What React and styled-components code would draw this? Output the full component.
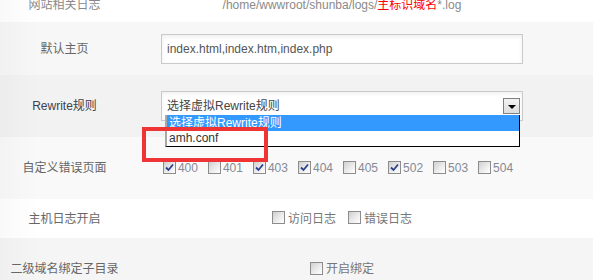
import React from 'react';
import styled, { createGlobalStyle } from 'styled-components';

const GlobalStyle = createGlobalStyle`
  html, body {
    margin: 0;
    padding: 0;
    background: #fff;
    overflow: hidden;
  }
  body {
    font-family: "Liberation Sans", "Noto Sans CJK SC", Arial, sans-serif;
    font-size: 12px;
  }
`;

// --- Layout ---
const Viewport = styled.div`
  width: 593px;
  height: 280px;
  overflow: hidden;
`;

const Page = styled.div`
  margin-top: -13px;
`;

const Row = styled.div`
  display: grid;
  grid-template-columns: 129px 426px 1fr;
  align-items: center;
  height: ${p => p.$h}px;
  background-color: ${p => p.$bg || '#fff'};
  background-image: linear-gradient(to right, rgba(0, 0, 0, 0.025), rgba(0, 0, 0, 0) 40px);
`;

const Label = styled.div`
  text-align: center;
  line-height: 16px;
  color: ${p => p.$color || '#666'};
`;

const Value = styled.div`
  display: flex;
  justify-content: center;
  align-items: center;
  line-height: 16px;
  color: #888;
`;

const Path = styled.span`
  color: #8a8a8a;
`;

const Red = styled.span`
  color: #f00;
`;

// --- Form parts ---
const TextInput = styled.div`
  box-sizing: border-box;
  width: 362px;
  height: 30px;
  padding-left: 5px;
  display: flex;
  align-items: center;
  background: #fff;
  border: 1px solid #c9c9c9;
  box-shadow: inset 0 2px 4px rgba(0, 0, 0, 0.07);
  color: #555;
`;

const SelectWrap = styled.div`
  position: relative;
  width: 362px;
  height: 30px;
`;

const SelectBox = styled.div`
  box-sizing: border-box;
  width: 100%;
  height: 100%;
  padding-left: 5px;
  display: flex;
  align-items: center;
  background: #fff;
  border: 1px solid #c9c9c9;
  box-shadow: inset 0 2px 4px rgba(0, 0, 0, 0.06);
  color: #444;
`;

const ArrowButton = styled.span`
  position: absolute;
  right: 3px;
  top: 7px;
  box-sizing: border-box;
  width: 17px;
  height: 16px;
  border: 1px solid #808080;
  background: linear-gradient(#f4f4f4, #dcdcdc);
  display: flex;
  align-items: center;
  justify-content: center;

  &::after {
    content: '';
    border-left: 4px solid transparent;
    border-right: 4px solid transparent;
    border-top: 4px solid #000;
    margin-top: 1px;
  }
`;

const OptionList = styled.div`
  position: absolute;
  left: 4px;
  top: 24px;
  z-index: 2;
  box-sizing: border-box;
  width: 355px;
  background: #fff;
  border-right: 1px solid #000;
  border-bottom: 1px solid #000;
  border-left: 2px solid #a8a8a8;
`;

const Option = styled.div`
  height: ${p => p.$h}px;
  line-height: ${p => p.$h}px;
  padding-left: 2px;
  background: ${p => (p.$active ? '#3399ff' : '#fff')};
  color: ${p => (p.$active ? '#fff' : '#333')};
`;

const Highlight = styled.div`
  position: absolute;
  left: -19px;
  top: 36px;
  z-index: 3;
  box-sizing: border-box;
  width: 126px;
  height: 35px;
  border: 4px solid #ee3434;
  pointer-events: none;
`;

// --- Checkboxes ---
const CheckGroup = styled.div`
  display: flex;
  align-items: center;
  gap: ${p => p.$gap}px;
  margin-right: ${p => p.$shift || 0}px;
`;

const CheckItem = styled.label`
  display: flex;
  align-items: center;
  gap: ${p => p.$gap || 3}px;
  color: ${p => p.$color || '#858a94'};
`;

const Box = styled.span`
  box-sizing: border-box;
  width: 13px;
  height: 13px;
  border: 1px solid #8c8c8c;
  background: linear-gradient(135deg, #cfcfcf 0%, #ececec 55%, #fff 100%);
  display: inline-flex;
  align-items: center;
  justify-content: center;
  margin-top: -2px;
`;

const Checkbox = ({ checked }) => (
  <Box>
    {checked && (
      <svg width="9" height="9" viewBox="0 0 9 9">
        <path d="M1 4.5 L3.5 7 L8 1.5" fill="none" stroke="#2b3f8f" strokeWidth="1.8" />
      </svg>
    )}
  </Box>
);

const codes = [
  ['400', true],
  ['401', false],
  ['403', true],
  ['404', true],
  ['405', false],
  ['502', true],
  ['503', false],
  ['504', false],
];

const App = () => (
  <>
    <GlobalStyle />
    <Viewport>
      <Page>
        <Row $h={35}>
          <Label $color="#888">网站相关日志</Label>
          <Value>
            <Path>
              /home/wwwroot/shunba/logs/<Red>主标识域名</Red>*.log
            </Path>
          </Value>
        </Row>

        <Row $h={53} $bg="#f7f7f7">
          <Label>默认主页</Label>
          <Value>
            <TextInput>index.html,index.htm,index.php</TextInput>
          </Value>
        </Row>

        <Row $h={62} $bg="#f2f2f2">
          <Label $color="#3c4150">Rewrite规则</Label>
          <Value>
            <SelectWrap>
              <SelectBox>选择虚拟Rewrite规则</SelectBox>
              <ArrowButton />
              <OptionList>
                <Option $h={16} $active>选择虚拟Rewrite规则</Option>
                <Option $h={15}>amh.conf</Option>
              </OptionList>
              <Highlight />
            </SelectWrap>
          </Value>
        </Row>

        <Row $h={62} $bg="#f9f9f9">
          <Label>自定义错误页面</Label>
          <Value>
            <CheckGroup $gap={10} $shift={8}>
              {codes.map(([code, on]) => (
                <CheckItem key={code} $gap={2}>
                  <Checkbox checked={on} />
                  {code}
                </CheckItem>
              ))}
            </CheckGroup>
          </Value>
        </Row>

        <Row $h={39}>
          <Label>主机日志开启</Label>
          <Value>
            <CheckGroup $gap={12}>
              <CheckItem $color="#777">
                <Checkbox />
                访问日志
              </CheckItem>
              <CheckItem $color="#777">
                <Checkbox />
                错误日志
              </CheckItem>
            </CheckGroup>
          </Value>
        </Row>

        <Row $h={62} $bg="#f5f5f5">
          <Label>二级域名绑定子目录</Label>
          <Value>
            <CheckItem $color="#777">
              <Checkbox />
              开启绑定
            </CheckItem>
          </Value>
        </Row>
      </Page>
    </Viewport>
  </>
);

export default App;
